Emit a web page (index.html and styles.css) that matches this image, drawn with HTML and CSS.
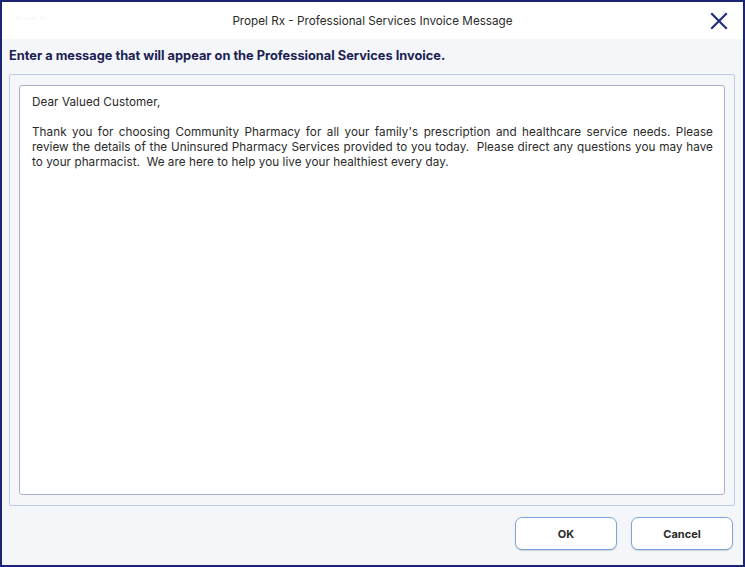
FILE: index.html
```html
<!DOCTYPE html>
<html>
<head>
<meta charset="utf-8">
<link rel="stylesheet" href="styles.css">
</head>
<body>
<div class="window">
  <header class="titlebar">
    <span class="logo">Propel Rx</span>
    <span class="title">Propel Rx - Professional Services Invoice Message</span>
    <svg class="close" width="18" height="18" viewBox="0 0 18 18"><path d="M2 2 L16 16 M16 2 L2 16" stroke="#24307a" stroke-width="2.2" stroke-linecap="square"/></svg>
  </header>
  <main class="body">
    <h1 class="heading">Enter a message that will appear on the Professional Services Invoice.</h1>
    <section class="panel">
      <div class="editor">
        <p class="line">Dear Valued Customer,</p>
        <p class="para">Thank you for choosing Community Pharmacy for all your family's prescription and healthcare service needs. Please review the details of the Uninsured Pharmacy Services provided to you today.&nbsp; Please direct any questions you may have to your pharmacist.&nbsp; We are here to help you live your healthiest every day.</p>
      </div>
    </section>
    <footer class="actions">
      <button class="btn">OK</button>
      <button class="btn">Cancel</button>
    </footer>
  </main>
</div>
</body>
</html>
```
FILE: styles.css
```css
* { box-sizing: border-box; }
html, body { margin: 0; padding: 0; }
body {
  width: 745px;
  height: 567px;
  font-family: Inter, "Noto Sans", sans-serif;
  background: #fff;
}
.window {
  width: 745px;
  height: 567px;
  border: 2px solid #1c2474;
  display: flex;
  flex-direction: column;
  background: #f5f6f9;
}
.titlebar {
  height: 37px;
  background: #fff;
  display: flex;
  align-items: center;
  justify-content: center;
  position: relative;
}
.logo {
  position: absolute;
  left: 14px;
  top: 13px;
  font-size: 5px;
  color: #f1f2f6;
  letter-spacing: 1px;
}
.title {
  font-size: 11.7px;
  color: #2b2b2b;
  margin-top: 1px;
}
.close {
  position: absolute;
  right: 15px;
  top: 10px;
}
.body {
  flex: 1;
  display: flex;
  flex-direction: column;
  padding: 0 8px 0 7px;
}
.heading {
  margin: 8px 0 0 0;
  font-size: 12.8px;
  font-weight: 700;
  color: #1b1f55;
  line-height: 18px;
}
.panel {
  margin-top: 9px;
  height: 432px;
  border: 1px solid #b9cde9;
  border-radius: 2px;
  padding: 10px 9px 10px 9px;
}
.editor {
  height: 100%;
  background: #fff;
  border: 1px solid #a9b0cb;
  border-radius: 3px;
  padding: 9px 11px 0 12px;
  font-size: 11.7px;
  letter-spacing: 0.06px;
  color: #2a2a2a;
  line-height: 15px;
}
.line { margin: 0 0 15px 0; }
.para { margin: 0; text-align: justify; }
.actions {
  display: flex;
  justify-content: flex-end;
  gap: 14px;
  padding-top: 11px;
  padding-right: 2px;
}
.btn {
  width: 102px;
  height: 33px;
  background: #fff;
  border: 1px solid #78a3dc;
  border-radius: 7px;
  font-family: Inter, "Noto Sans", sans-serif;
  font-size: 11px;
  font-weight: 700;
  color: #2b2b2b;
  box-shadow: 0 1px 1px rgba(0,0,0,0.15);
}
```
